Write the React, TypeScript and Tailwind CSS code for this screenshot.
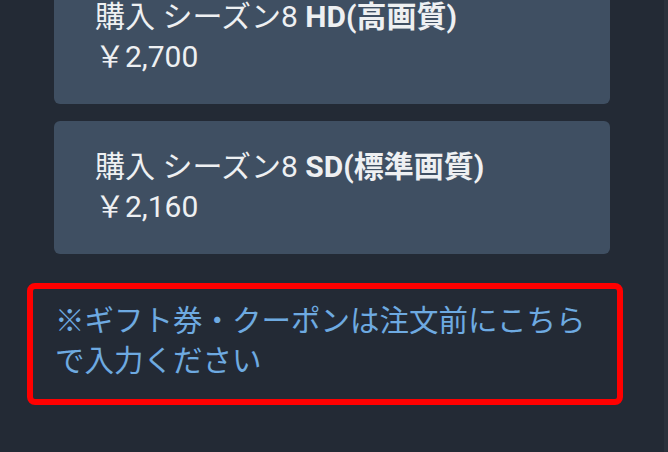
const font = { fontFamily: 'Roboto, "Noto Sans CJK JP", sans-serif' }

const offers = [
  { label: '購入 シーズン8', quality: 'HD(高画質)', price: '￥2,700' },
  { label: '購入 シーズン8', quality: 'SD(標準画質)', price: '￥2,160' },
]

function OfferCard({ label, quality, price }: { label: string; quality: string; price: string }) {
  return (
    <div className="w-[556px] h-[133px] rounded-md bg-[#3f4f62] pl-[41px] pt-[26px] text-[30px] leading-[40px] text-[#eef0f2]">
      <div>
        {label} <span className="font-bold">{quality}</span>
      </div>
      <div>{price}</div>
    </div>
  )
}

export default function App() {
  return (
    <div className="w-[668px] h-[452px] overflow-hidden bg-[#232a35] flex" style={font}>
      <div className="flex-1 flex flex-col">
        <div className="-mt-[29px] ml-[54px] flex flex-col gap-[17px]">
          {offers.map((o) => (
            <OfferCard key={o.quality} {...o} />
          ))}
        </div>
        <div className="mt-[29px] ml-[27px] w-[596px] rounded-lg border-[6px] border-[#ff0000] pl-[22px] pr-[6px] pt-[12px] pb-[18px]">
          <a className="block w-[556px] text-[29.5px] leading-[40px] text-[#6eaae1]">
            ※ギフト券・クーポンは注文前にこちらで入力ください
          </a>
        </div>
      </div>
      <div className="w-[4px] bg-[#2a313c]" />
    </div>
  )
}
